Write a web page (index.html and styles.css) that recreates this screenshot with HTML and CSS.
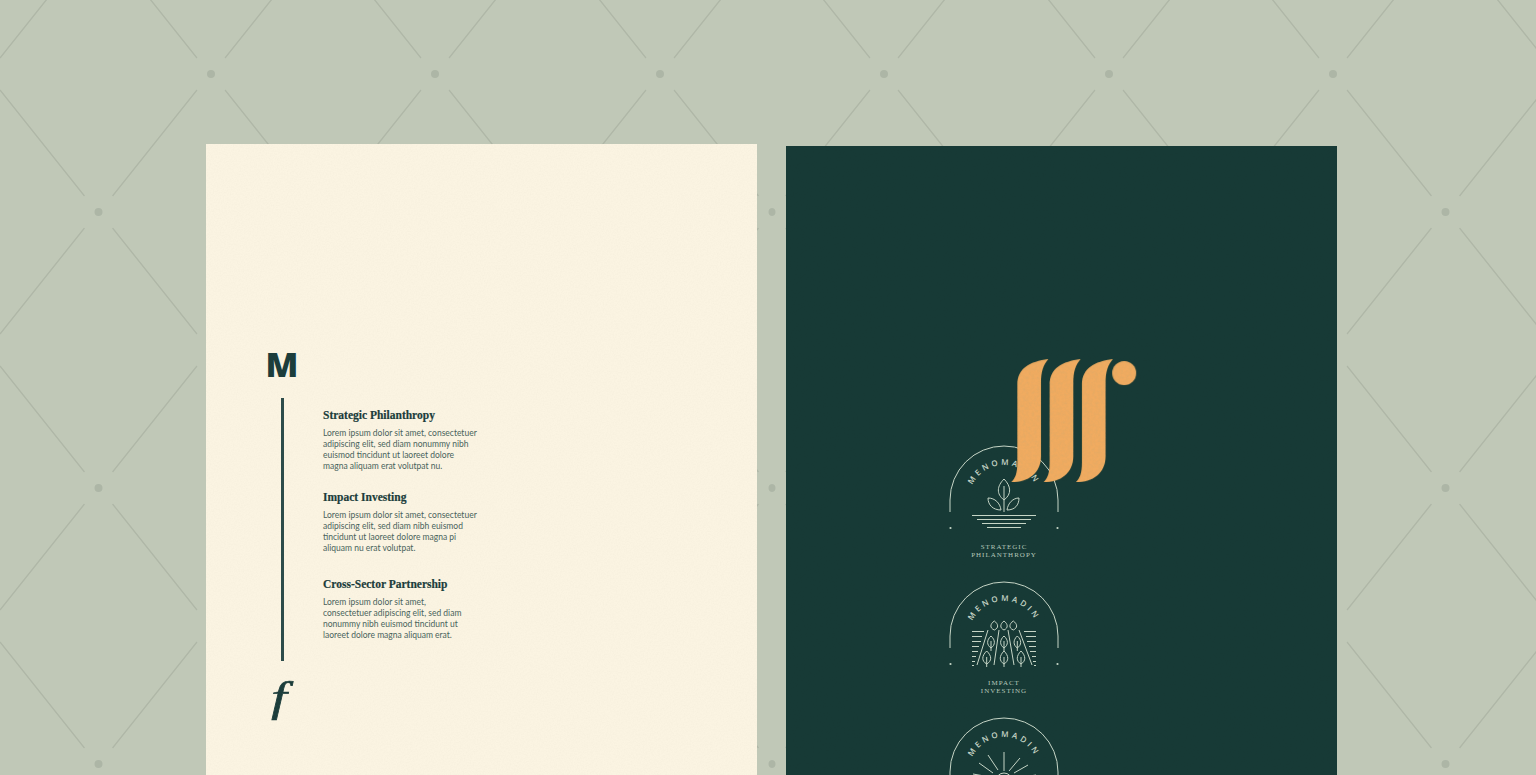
FILE: index.html
```html
<!DOCTYPE html>
<html lang="en">
<head>
  <meta charset="UTF-8" />
  <title>Menomadin Stationery</title>
  <link rel="stylesheet" href="styles.css">
</head>
<body>
  <main class="sheets">

    <!-- Light sheet -->
    <section class="sheet sheet-light">
      <div class="mark">
        <div class="mark-m">M</div>
        <div class="mark-line"></div>
        <div class="mark-f">f</div>
      </div>
      <div class="areas">
        <div class="area">
          <h3>Strategic Philanthropy</h3>
          <p>Lorem ipsum dolor sit amet, consectetuer<br>adipiscing elit, sed diam nonummy nibh<br>euismod tincidunt ut laoreet dolore<br>magna aliquam erat volutpat nu.</p>
        </div>
        <div class="area">
          <h3>Impact Investing</h3>
          <p>Lorem ipsum dolor sit amet, consectetuer<br>adipiscing elit, sed diam nibh euismod<br>tincidunt ut laoreet dolore magna pi<br>aliquam nu erat volutpat.</p>
        </div>
        <div class="area area-last">
          <h3>Cross-Sector Partnership</h3>
          <p>Lorem ipsum dolor sit amet,<br>consectetuer adipiscing elit, sed diam<br>nonummy nibh euismod tincidunt ut<br>laoreet dolore magna aliquam erat.</p>
        </div>
      </div>
    </section>

    <!-- Dark sheet -->
    <section class="sheet sheet-dark">
      <svg class="gold-logo" viewBox="213 28 380 372" aria-hidden="true">
        <filter id="foil" x="0" y="0" width="100%" height="100%">
          <feTurbulence type="fractalNoise" baseFrequency="0.12" numOctaves="3" seed="4" />
          <feColorMatrix values="0 0 0 0 0.62  0 0 0 0 0.38  0 0 0 0 0.14  0.7 0 0 0 -0.27" />
          <feComposite in2="SourceGraphic" operator="in" />
          <feMerge>
            <feMergeNode in="SourceGraphic" />
            <feMergeNode />
          </feMerge>
        </filter>
        <g filter="url(#foil)">
          <path id="gold-stroke" d="M325 28C270 35 232 55 232 105V340C232 370 226 388 213 398C265 398 303 370 303 320V100C303 65 310 45 325 28Z" />
          <use href="#gold-stroke" x="97" />
          <use href="#gold-stroke" x="194" />
          <circle cx="553" cy="70" r="36" />
        </g>
      </svg>

      <div class="emblems">
        <div class="emblem">
          <svg class="badge" viewBox="0 0 110 88">
            <path class="ln" d="M1 67V55A54 54 0 0 1 109 55V67" />
            <circle class="dot" cx="1.500" cy="83" r="1.100" />
            <circle class="dot" cx="108.500" cy="83" r="1.100" />
            <path id="arc-a" class="guide" d="M20 55A35 35 0 0 1 90 55" />
            <text class="arc-text"><textPath href="#arc-a" startOffset="50%">MENOMADIN</textPath></text>
            <path class="ln" d="M55 34C48 41 47 49 55 55C63 49 62 41 55 34ZM55 41V67" />
            <path class="ln" d="M52 65C44 65 39 60 39 53C46 53 51 58 52 65ZM58 65C66 65 70 60 70 53C64 53 59 58 58 65Z" />
            <path class="ln" d="M23 70.500H87M28 74.500H82M33 78.500H77M38 82.500H72" />
          </svg>
          <div class="caption">STRATEGIC<br>PHILANTHROPY</div>
        </div>

        <div class="emblem">
          <svg class="badge" viewBox="0 0 110 88">
            <path class="ln" d="M1 67V55A54 54 0 0 1 109 55V67" />
            <circle class="dot" cx="1.500" cy="83" r="1.100" />
            <circle class="dot" cx="108.500" cy="83" r="1.100" />
            <path id="arc-b" class="guide" d="M20 55A35 35 0 0 1 90 55" />
            <text class="arc-text"><textPath href="#arc-b" startOffset="50%">MENOMADIN</textPath></text>
            <path class="ln" d="M45.300 40C41 43 40.500 47 45.300 49C50 47 49.500 43 45.300 40ZM55 40C51 43 50.500 47 55 49C59.500 47 59 43 55 40ZM64.300 40C60 43 59.500 47 64.300 49C69 47 68.500 43 64.300 40Z" />
            <path class="ln" d="M42 55C37.500 59 37.500 64 42 67C46.500 64 46.500 59 42 55ZM55 55C50.500 59 50.500 64 55 67C59.500 64 59.500 59 55 55ZM68.300 55C64 59 64 64 68.300 67C72.800 64 72.800 59 68.300 55ZM42 60V70M55 60V70M68.300 60V70" />
            <path class="ln" d="M37.700 70C32.500 75 32.500 80 37.700 83C43 80 43 75 37.700 70ZM55 70C50 75 50 80 55 83C60 80 60 75 55 70ZM72 70C67 75 67 80 72 83C77 80 77 75 72 70ZM37.700 76V86M55 76V86M72 76V86" />
            <path class="ln" d="M39 49L28 84M50 49L45 84M59 49L65 84M70 49L83 84" />
            <path class="ln" d="M23 50.500H35M23 55.500H33M23 60.500H32M23 65.500H30M23 70.500H29M23 75.500H27M23 80.500H26M23 84.500H25M87 50.500H75M87 55.500H77M87 60.500H78M87 65.500H80M87 70.500H81M87 75.500H83M87 80.500H84M87 84.500H85" />
          </svg>
          <div class="caption">IMPACT<br>INVESTING</div>
        </div>

        <div class="emblem">
          <svg class="badge" viewBox="0 0 110 88">
            <path class="ln" d="M1 67V55A54 54 0 0 1 109 55V67" />
            <path id="arc-c" class="guide" d="M20 55A35 35 0 0 1 90 55" />
            <text class="arc-text"><textPath href="#arc-c" startOffset="50%">MENOMADIN</textPath></text>
            <path class="ln" d="M55 35V54M39 38L49 53M30 46L44 56M24 57L41 60M71 41L60 54M79 48L65 56M87 58L68 61M47 64A8 8 0 0 1 63 64" />
          </svg>
        </div>
      </div>
    </section>

  </main>
</body>
</html>
```
FILE: styles.css
```css
:root {
  --sage: #c0c8b7;
  --cream: #fbf4e2;
  --pine: #173a36;
  --ink: #1c3d3b;
  --body-ink: #49635c;
  --gold: #f0ab60;
  --mist: #c6d5c6;
  --grain: url("data:image/svg+xml,%3Csvg xmlns='http://www.w3.org/2000/svg' width='300' height='300'%3E%3Cfilter id='n'%3E%3CfeTurbulence type='fractalNoise' baseFrequency='0.7' numOctaves='3'/%3E%3CfeColorMatrix values='0 0 0 0 0 0 0 0 0 0 0 0 0 0 0 0.5 0 0 0 -0.2'/%3E%3C/filter%3E%3Crect width='300' height='300' filter='url(%23n)' opacity='0.06'/%3E%3C/svg%3E");
}
* {
  box-sizing: border-box;
}
html, body {
  height: 775px;
  overflow: hidden;
}
body {
  margin: 0;
  background-color: var(--sage);
  background-image: url("data:image/svg+xml,%3Csvg xmlns='http://www.w3.org/2000/svg' width='224.5' height='276'%3E%3Cg stroke='%23afb7a7' stroke-width='1.3' fill='none'%3E%3Cpath d='M14 16L98.250 122M210.500 16L126.250 122M14 260L98.250 154M210.500 260L126.250 154'/%3E%3C/g%3E%3Cg fill='%23adb6a6'%3E%3Ccircle cx='112.250' cy='138' r='4'/%3E%3Ccircle cx='0' cy='0' r='4'/%3E%3Ccircle cx='224.500' cy='0' r='4'/%3E%3Ccircle cx='0' cy='276' r='4'/%3E%3Ccircle cx='224.500' cy='276' r='4'/%3E%3C/g%3E%3C/svg%3E");
  background-size: 224.5px 276px;
  background-position: -13.75px 74px;
}
.sheets {
  display: flex;
  gap: 29px;
  padding: 144px 0 0 206px;
  height: 100%;
}
.sheet {
  width: 551px;
  flex: none;
  overflow: hidden;
}

/* light sheet */
.sheet-light {
  background: var(--grain), var(--cream);
  display: flex;
  padding: 202px 0 0 60px;
  color: var(--ink);
}
.mark {
  width: 32px;
  display: flex;
  flex-direction: column;
  align-items: center;
}
.mark-m {
  font-family: "Open Sans", sans-serif;
  font-weight: 800;
  font-size: 34px;
  line-height: 36px;
}
.mark-line {
  width: 3px;
  height: 263px;
  margin-top: 16px;
  background: #2d4c4a;
}
.mark-f {
  font-family: "Liberation Serif", serif;
  font-style: italic;
  font-size: 43px;
  line-height: 48px;
  margin-top: 12px;
  margin-left: -6px;
  transform: scaleX(1.3);
  -webkit-text-stroke: 0.7px var(--ink);
}
.areas {
  margin-left: 25px;
  padding-top: 61px;
}
.area {
  margin-bottom: 17px;
}
.area-last {
  margin-top: 22px;
}
.area h3 {
  font-family: "Liberation Serif", serif;
  font-weight: 700;
  font-size: 11.500px;
  line-height: 16px;
  margin: 0 0 5px;
  -webkit-text-stroke: 0.2px var(--ink);
}
.area p {
  font-family: Lato, sans-serif;
  font-size: 8.500px;
  line-height: 11px;
  margin: 0;
  color: var(--body-ink);
  white-space: nowrap;
}

/* dark sheet */
.sheet-dark {
  position: relative;
  margin-top: 2px;
  background: var(--grain), var(--pine);
  padding: 299px 0 0 163px;
}
.gold-logo {
  position: absolute;
  left: 225px;
  top: 213px;
  width: 126.500px;
  height: 124px;
  fill: var(--gold);
}
.emblem {
  width: 110px;
  height: 136px;
}
.badge {
  display: block;
  width: 110px;
  height: 88px;
  overflow: visible;
}
.ln {
  fill: none;
  stroke: var(--mist);
  stroke-width: 1;
}
.dot {
  fill: var(--mist);
}
.guide {
  fill: none;
}
.arc-text {
  font-family: "Open Sans", sans-serif;
  font-size: 8px;
  font-weight: 600;
  letter-spacing: 3px;
  fill: var(--mist);
  text-anchor: middle;
}
.caption {
  margin-top: 10px;
  font-family: "Liberation Serif", serif;
  font-size: 7px;
  line-height: 8px;
  letter-spacing: 1px;
  text-align: center;
  color: #b5c7ba;
}
```
